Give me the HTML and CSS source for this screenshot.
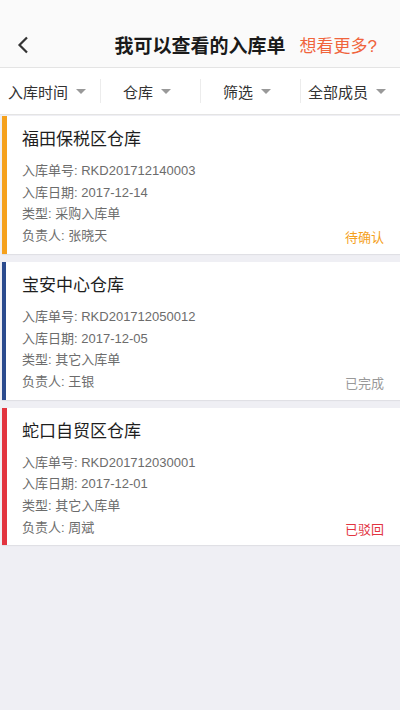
FILE: index.html
```html
<html>

<head>
    <meta charset="utf-8">
    <title>我可以查看的入库单</title>
    <link rel="stylesheet" href="styles.css">
</head>

<body>
    <div class="header">
        <div class="back">
            <svg width="14" height="18" viewBox="0 0 14 18">
                <polyline points="11,1.5 3.5,9 11,16.5" fill="none" stroke="#333" stroke-width="2.2" />
            </svg>
        </div>
        <div class="title">我可以查看的入库单</div>
        <div class="more">想看更多?</div>
    </div>

    <div class="filters">
        <div class="filter filter-first">入库时间<span class="caret"></span></div>
        <div class="filter">仓库<span class="caret"></span></div>
        <div class="filter">筛选<span class="caret"></span></div>
        <div class="filter">全部成员<span class="caret"></span></div>
    </div>

    <div class="list">
        <div class="card card-orange">
            <div class="card-title">福田保税区仓库</div>
            <div class="line">入库单号: RKD201712140003</div>
            <div class="line">入库日期: 2017-12-14</div>
            <div class="line">类型: 采购入库单</div>
            <div class="line last">负责人: 张晓天<span class="status st-wait">待确认</span></div>
        </div>
        <div class="card card-blue">
            <div class="card-title">宝安中心仓库</div>
            <div class="line">入库单号: RKD201712050012</div>
            <div class="line">入库日期: 2017-12-05</div>
            <div class="line">类型: 其它入库单</div>
            <div class="line last">负责人: 王银<span class="status st-done">已完成</span></div>
        </div>
        <div class="card card-red">
            <div class="card-title">蛇口自贸区仓库</div>
            <div class="line">入库单号: RKD201712030001</div>
            <div class="line">入库日期: 2017-12-01</div>
            <div class="line">类型: 其它入库单</div>
            <div class="line last">负责人: 周斌<span class="status st-back">已驳回</span></div>
        </div>
    </div>
</body>

</html>
```
FILE: styles.css
```css
body {
    margin: 0;
    background: #efeff4;
    font-family: "Liberation Sans", "Noto Sans CJK SC", sans-serif;
    color: #333;
    height: 710px;
}

/* top bar */
.header {
    display: grid;
    grid-template-columns: 1fr auto 1fr;
    align-items: center;
    height: 68px;
    padding-top: 22px;
    box-sizing: border-box;
    background: #fafafa;
    border-bottom: 1px solid #e4e4e4;
}

.back {
    padding-left: 16px;
    display: flex;
    align-items: center;
}

.title {
    font-size: 19px;
    font-weight: bold;
    color: #1a1a1a;
}

.more {
    font-size: 17px;
    color: #f0643c;
    padding-left: 14px;
}

/* filter row */
.filters {
    display: flex;
    height: 46px;
    background: #fff;
    border-bottom: 1px solid #e4e4e4;
}

.filter {
    flex: 1;
    display: flex;
    align-items: center;
    justify-content: center;
    font-size: 15px;
    color: #333;
    position: relative;
    padding-right: 6px;
}

.filter::before {
    content: "";
    position: absolute;
    left: 0;
    top: 11px;
    bottom: 11px;
    width: 1px;
    background: #ececec;
}

.filter-first::before {
    display: none;
}

.caret {
    width: 0;
    height: 0;
    margin-left: 8px;
    border-left: 5px solid transparent;
    border-right: 5px solid transparent;
    border-top: 5px solid #999;
}

/* list */
.list {
    padding-top: 1px;
}

.card {
    background: #fff;
    margin: 0 0 8px 2px;
    padding: 12px 16px 7px 15px;
    border-left: 5px solid #ccc;
    box-shadow: 0 1px 1px rgba(0, 0, 0, .06);
}

.card-orange {
    border-left-color: #f5a11c;
}

.card-blue {
    border-left-color: #2b4b8e;
    border-left-width: 4px;
    padding-left: 16px;
}

.card-red {
    border-left-color: #e2343f;
}

.card-title {
    font-size: 17px;
    color: #1e1e1e;
    line-height: 24px;
    margin-bottom: 8px;
}

.line {
    font-size: 13px;
    color: #6c6c6c;
    line-height: 21.7px;
}

.last {
    display: flex;
    justify-content: space-between;
}

.status {
    font-size: 13px;
    position: relative;
    top: 2px;
}

.st-wait {
    color: #f5a11c;
}

.st-done {
    color: #999;
}

.st-back {
    color: #e2343f;
}
```
